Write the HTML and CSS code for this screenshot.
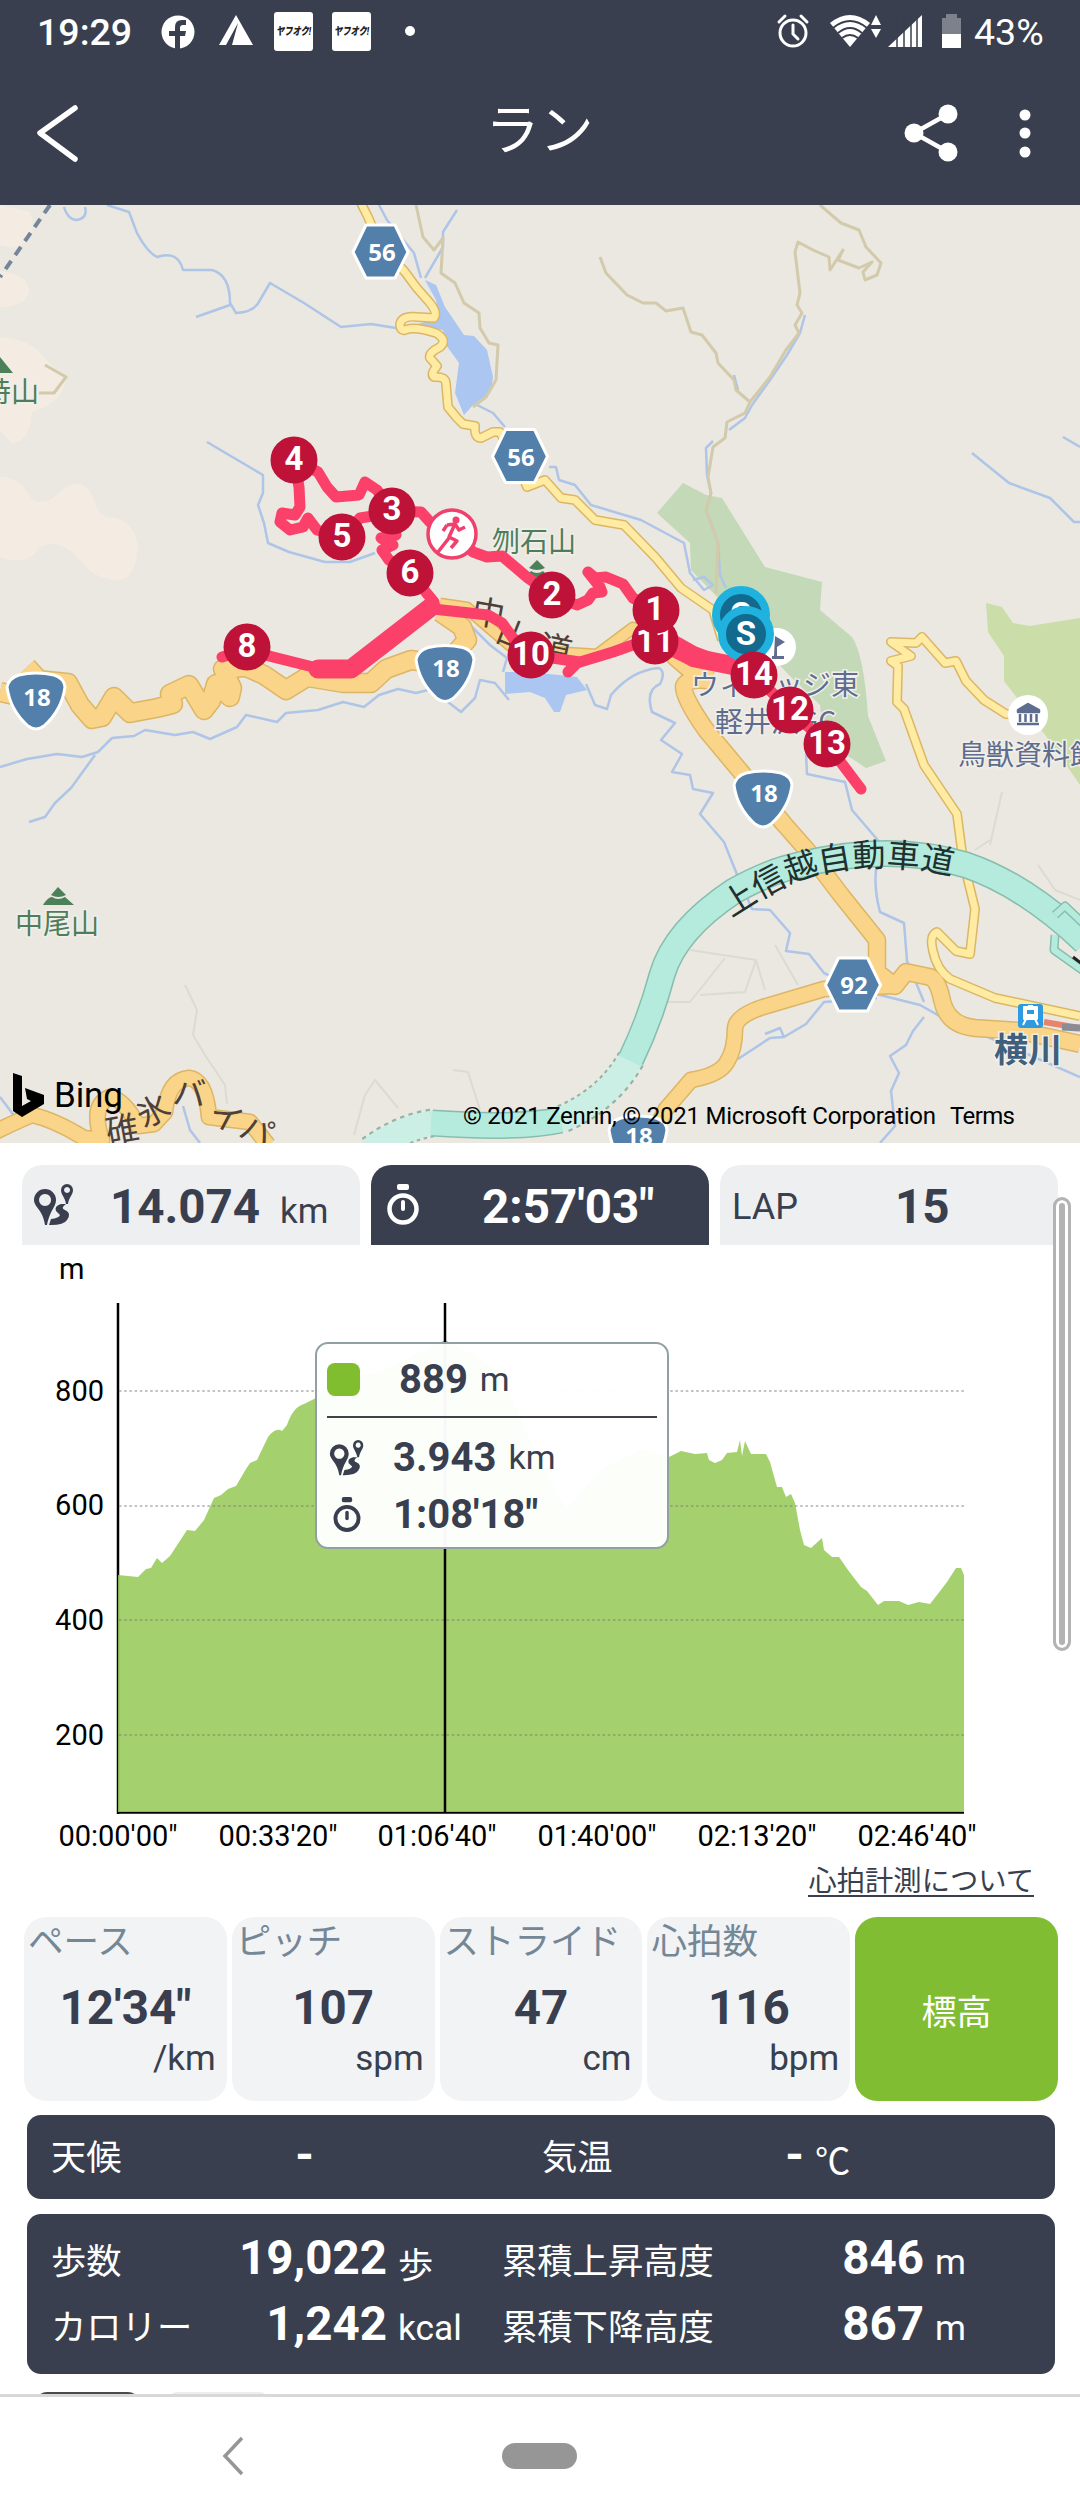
FILE: index.html
```html
<!DOCTYPE html>
<html lang="ja">
<head>
<meta charset="UTF-8">
<meta name="viewport" content="width=device-width, initial-scale=1.0">
<title>ラン</title>
<link rel="stylesheet" href="styles.css">
</head>
<body>
  <div class="status-bar">
    <span class="clock">19:29</span>
    <svg class="status-icons" width="260" height="64" viewBox="155 0 260 64">
      <circle cx="178" cy="32" r="16.5" fill="#fff"/>
      <path d="M175 49V36h-6v-5h6v-4q0-7 7-7h4v5h-3q-3 0-3 3v3h6l-1 5h-5v13z" fill="#393f4e"/>
      <path d="M236 15L253 45H232L238 23L226 45H219Z" fill="#fff"/>
      <rect x="274" y="12" width="39" height="39" rx="3" fill="#fff"/>
      <rect x="332" y="12" width="39" height="39" rx="3" fill="#fff"/>
      <text class="app-badge" x="276" y="35" textLength="35" lengthAdjust="spacingAndGlyphs">ヤフオク!</text>
      <text class="app-badge" x="334" y="35" textLength="35" lengthAdjust="spacingAndGlyphs">ヤフオク!</text>
      <circle cx="410" cy="31" r="5" fill="#fff"/>
    </svg>
    <svg class="status-right" width="190" height="64" viewBox="775 0 190 64">
      <g fill="none" stroke="#fff" stroke-width="3" stroke-linecap="round">
        <circle cx="793" cy="33" r="13"/>
        <path d="M793 25v9l5 5M779 22l6-6M807 22l-6-6"/>
      </g>
      <path d="M850 47L830 23Q850 7 870 23Z" fill="#fff"/>
      <g fill="none" stroke="#393f4e" stroke-width="2">
        <path d="M833 28Q850 14 867 28M838 33Q850 23 862 33M842 38Q850 32 858 38"/>
      </g>
      <path d="M876 15l5 10h-10zM876 38l5-9h-10z" fill="#fff"/>
      <path d="M888 47L922 15V47Z" fill="#fff"/>
      <path d="M897 15v32M904 15v32M911 15v32M917 15v32" stroke="#393f4e" stroke-width="1.5"/>
      <path d="M946 18v-4h11v4h4v17h-19V18z" fill="#7d818b"/>
      <rect x="942" y="34" width="19" height="14" fill="#fff"/>
    </svg>
    <span class="battery">43%</span>
  </div>

  <div class="app-bar">
    <svg width="120" height="140" viewBox="0 64 120 140">
      <path class="back" d="M75 108L40 133L75 159"/>
    </svg>
    <h1>ラン</h1>
    <svg width="180" height="140" viewBox="900 64 180 140">
      <path d="M948 114L914 133L948 152" fill="none" stroke="#fff" stroke-width="4.500"/>
      <g fill="#fff">
        <circle cx="948" cy="114" r="9.500"/><circle cx="914" cy="133" r="9.500"/><circle cx="948" cy="152" r="9.500"/>
        <circle cx="1025" cy="115" r="5.500"/><circle cx="1025" cy="133" r="5.500"/><circle cx="1025" cy="152" r="5.500"/>
      </g>
    </svg>
  </div>

  <svg class="map" width="1080" height="938" viewBox="0 205 1080 938">
    <defs>
      <path id="r56" d="M361 203L368 217L380 245L405 272L416 287L430 303Q438 313 434 318L418 317Q402 315 400 324Q400 331 405 330Q414 326 436 333Q448 340 440 347Q428 353 430 358L437 366Q430 374 434 377Q446 376 446 384L448 407L457 418L463 424L475 426Q474 438 481 438L493 432L500 432L520 470L527 487L545 480L561 498L575 500L595 520L624 525L656 558L681 588L713 610L722 640"/>
      <path id="ne" d="M1020 715L1006 714L984 700L966 681L956 661L945 663L922 637L916 643L891 642L911 656L891 661L898 666L897 702L904 709L924 765L957 814L963 860L975 909L970 954L956 951L937 932Q929 935 933 951Q937 970 950 979L995 998L1080 1016"/>
      <path id="r18w" d="M0 692L36 700M27 667L39 680L68 683L80 705L92 719L102 717L114 697L130 713L157 708L173 704L170 694L189 685L204 710L211 701L216 684L230 697L232 688L223 669L246 667L264 675L286 690L307 677L343 683L371 683L386 669L411 660L445 665L467 640L462 627L440 612"/>
      <path id="r18m" d="M440 604L467 608L490 628L510 645L550 652L597 655L613 643L633 628L655 640L674 660L688 672L713 670"/>
      <path id="r18e" d="M713 681Q688 677 684 686Q682 696 706 730L741 772L784 824L806 849L841 895L877 940V972L895 986L906 972L930 977Q938 980 942 1000Q947 1025 975 1028L1020 1031L1080 1044"/>
      <path id="r92" d="M895 986L824 989L763 1007Q736 1016 735 1028Q735 1050 727 1062Q720 1075 691 1080L666 1109L650 1140"/>
      <path id="bypass" d="M-5 1132Q15 1122 32 1115Q55 1120 84 1138L102 1140Q90 1105 110 1097Q125 1100 138 1126L154 1124L165 1112Q168 1080 189 1078Q206 1080 209 1117L250 1122L268 1145"/>
    </defs>
    <rect x="0" y="205" width="1080" height="938" fill="#eae8e0"/>

    <g fill="#f4ece3">
      <path d="M0 205L30 212Q40 240 14 248L0 245zM0 271Q30 275 29 292Q25 307 0 307zM0 337Q35 340 46 360L66 377Q65 402 32 412Q30 443 11 443L0 430z"/>
      <path d="M0 477Q20 476 32 500Q45 505 54 497Q80 470 93 497Q97 514 107 517Q135 518 138 548Q135 580 118 580Q95 580 80 560Q60 537 39 547Q30 567 0 557z"/>
    </g>
    <path class="boundary" d="M50 205L0 277"/>
    <path fill="#c3d9b7" d="M683 483L706 495L722 498L765 567L822 582L820 610L852 637Q864 655 868 716L886 761L866 768L824 740L820 705L788 674L720 600L691 570L690 543L657 513z"/>
    <path fill="#cbdda9" d="M986 603L1002 607L1013 623L1030 626L1080 618V785L1049 740L1004 681V656L988 632z"/>

    <g class="water-area">
      <path d="M425 280L436 285L445 307L464 335L474 336L487 350L493 377L491 392L473 405L464 415L455 393L459 363L446 345L443 330L414 325L439 318L436 300z"/>
      <path d="M505 672L530 672L577 677L587 690L566 695L560 712L554 712L545 698L530 692L505 694z"/>
    </g>
    <g class="river">
      <path d="M107 205L129 212L137 233Q147 252 157 257Q178 250 183 270H212Q230 275 230 303L236 313Q255 312 260 300L270 283L304 303L341 327L371 324L396 328M196 317L230 305M64 207Q68 220 77 220Q88 218 85 207"/>
      <path d="M379 205L387 220L414 253L421 278M457 210L443 232V247L425 278M475 404L493 413L505 427M549 467H556L559 480L575 485L591 505L641 520L684 543L690 573L704 590L713 585L704 577L693 580"/>
      <path d="M207 442L229 455L263 475V493L258 505L264 523L268 543L289 552L325 562H350L375 553"/>
      <path d="M0 767L27 759L57 754L82 757L98 752L112 738L134 736L145 730L175 735L193 732L210 739L237 727L246 715L277 722L286 713L318 710L343 702L364 707L379 695L398 689L416 693L428 690M448 702L461 712L475 698L480 680L495 683L509 700M95 755L71 788L55 803L45 817L29 822M468 623L490 645L507 658L503 672"/>
      <path d="M586 684L595 705L607 709L611 695Q632 670 659 668Q666 672 660 684Q645 690 652 712L675 723L661 740L682 754L672 772L690 775L693 789L713 793L700 814L724 842L738 877L752 909L770 910L790 933L786 951L809 954L824 973L860 990L920 1005L952 1023L988 1037L1080 1077"/>
      <path d="M806 754L807 774L845 782L852 810L882 845Q870 875 880 912L904 923L907 961L924 1002M738 1059L770 1038L784 1037L806 1024L824 1002L877 998M924 1017L913 1031L906 1045L890 1056L899 1073L891 1091L895 1126L880 1143M765 1034L780 1028L784 1037"/>
      <path d="M972 453L1009 483L1050 498L1074 522H1080M1063 437L1080 447M805 315L800 333L787 355L770 380L752 405L745 418L729 430M713 441L706 448L707 475L711 493L706 510L718 543L720 575L726 588M734 375L738 390M0 1097L15 1117M183 1106L190 1130L200 1143"/>
    </g>
    <g class="trail">
      <path d="M416 205L423 237L434 250L443 238L441 273L455 283L464 303L479 313L480 328L489 343L498 345L496 380L486 397L473 407M45 365L66 377L54 393H39"/>
      <path d="M600 257L606 273L627 295L643 303H656L666 311L683 308L691 332L702 335L716 353L718 363L734 380L736 390L750 402L745 413L727 422L725 438L713 447L708 477L711 493L706 510L718 543L716 593M750 402L770 377L786 350L799 333L795 325L802 313L797 305L800 293L795 252L798 242L813 250L829 257L830 270L843 250L838 260L859 268L872 262L863 272L865 280L877 275L881 263L866 247L859 230L841 223L820 205"/>
    </g>
    <g class="path-faint">
      <path d="M185 985L197 1010L193 1035L205 1055L225 1085L227 1104M354 1135L365 1095L375 1080L398 1108M453 1070L468 1072L480 1110M668 1002L690 1002L725 958M690 950L756 960L745 992L700 995M756 960L765 990M775 945L798 985M1002 792L990 845M1038 865L1055 890L1080 900M975 850L990 840"/>
    </g>

    <g class="casing">
      <use href="#r18w" class="w20"/><use href="#r18m" class="w13"/><use href="#r56" class="w10"/><use href="#ne" class="w10"/>
      <use href="#r92" class="w17"/><use href="#r18e" class="w19"/><use href="#bypass" class="w17"/>
    </g>
    <g class="road">
      <use href="#r18w" class="w18 orange"/><use href="#r18m" class="w10 orange"/><use href="#r56" class="w7 yellow"/><use href="#ne" class="w7 yellow"/>
      <use href="#r92" class="w14 orange"/><use href="#r18e" class="w16 orange"/><use href="#bypass" class="w14 orange"/>
    </g>

    <!-- expressway, tunnel sections are lighter with dotted edges -->
    <g fill="none">
      <path d="M631 1059Q608 1100 560 1120M432 1123Q400 1128 370 1150" stroke="#8fb5a9" stroke-width="29" stroke-dasharray="4 4"/>
      <path d="M631 1059Q608 1100 560 1120M432 1123Q400 1128 370 1150" stroke="#cbefe4" stroke-width="25"/>
      <path d="M560 1120Q520 1129 432 1123M631 1059Q650 1020 662 975Q675 930 734 891Q770 871 799 865Q890 842 966 865Q1025 885 1085 942" stroke="#86bdae" stroke-width="27"/>
      <path d="M561 1120Q520 1129 431 1123M630 1061Q650 1020 662 975Q675 930 734 891Q770 871 799 865Q890 842 966 865Q1025 885 1085 942" stroke="#b4ebdd" stroke-width="24"/>
      <path d="M1055 915L1065 906L1085 925M1055 935L1054 950L1085 972" stroke="#86bdae" stroke-width="9"/>
      <path d="M1055 915L1065 906L1085 925M1055 935L1054 950L1085 972" stroke="#b4ebdd" stroke-width="6"/>
    </g>

    <g class="map-label green">
      <text x="-17" y="402">特山</text>
      <text x="15" y="934">中尾山</text>
      <text x="492" y="552">刎石山</text>
    </g>
    <g fill="#4c8058">
      <path d="M-13 373Q-7 360 0 357L13 373z"/>
      <path d="M51 895L58 887L66 895Q58 899 51 895M43 905Q48 897 52 897Q58 901 65 897L74 905z"/>
      <path d="M529 568L537 560L545 568Q537 572 529 568M525 577L531 571Q537 575 543 571L549 577z"/>
    </g>
    <g class="map-label slate">
      <text x="691" y="695">ウィレッジ東</text>
      <text x="715" y="732">軽井沢GC</text>
      <text x="958" y="765">鳥獣資料館</text>
    </g>
    <g class="road-name">
      <path id="expName" d="M731 918Q785 882 815 875Q885 857 962 878" fill="none"/>
      <text><textPath href="#expName" textLength="233">上信越自動車道</textPath></text>
      <text class="brown" transform="translate(470 622) rotate(10)">中</text>
      <text class="brown" transform="translate(494 640) rotate(22)">山</text>
      <text class="brown" transform="translate(537 657) rotate(12)">道</text>
      <text class="brown" transform="translate(108 1144) rotate(-10)">碓</text>
      <text class="brown" transform="translate(144 1129) rotate(-28)">氷</text>
      <text class="brown" transform="translate(172 1104) rotate(4)">バ</text>
      <text class="brown" transform="translate(206 1120) rotate(28)">イ</text>
      <text class="brown" transform="translate(237 1136) rotate(22)">パ</text>
      <path d="M1073 957L1082 964" stroke="#222" stroke-width="3"/>
    </g>

    <g class="shield">
      <path id="hex" d="M366 225H395L408 252L395 278H366L353 252z"/>
      <use href="#hex" x="139.500" y="204.500"/>
      <use href="#hex" x="472.500" y="733"/>
      <path id="oni" d="M19 675Q36 671 54 675Q64 678 65 687Q62 710 44 726Q36 732 28 726Q10 710 7 687Q9 678 19 675z"/>
      <use href="#oni" x="409" y="-27.500"/>
      <use href="#oni" x="727" y="98"/>
      <use href="#oni" x="602" y="443"/>
    </g>
    <g class="shield-text">
      <text x="382" y="261">56</text><text x="521" y="466">56</text><text x="854" y="994">92</text>
      <text x="37" y="706">18</text><text x="446" y="677">18</text><text x="764" y="802">18</text><text x="639" y="1145">18</text>
    </g>

    <circle cx="1028" cy="715" r="20" fill="#fff"/>
    <path d="M1018 710L1028 704L1039 710V712H1018zM1020 714v8M1025.500 714v8M1031 714v8M1036.500 714v8M1017 724h22" fill="#5e6c8e" stroke="#5e6c8e" stroke-width="2.500"/>
    <circle cx="777" cy="647" r="19" fill="#fff"/>
    <path d="M775 636L785 642L777 647V656h7v3h-12v-3h2z" fill="#5e6c8e"/>
    <path d="M1044 1022L1080 1028" stroke="#e8836e" stroke-width="6"/>
    <path d="M1062 1027L1080 1028" stroke="#8b8b96" stroke-width="7"/>
    <rect x="1018" y="1004" width="25" height="24" rx="3" fill="#2e9be0"/>
    <path d="M1024 1007h13v12h-13zM1026 1019l-3 6M1035 1019l3 6M1028 1006h5" fill="#fff" stroke="#fff" stroke-width="2"/>
    <path d="M1027 1010h7v4h-7z" fill="#2e9be0"/>
    <text class="station" x="994" y="1062">横川</text>

    <g class="track">
      <path d="M861 789L827 744L790 710L754 675L727 664L695 652L656 630V610L633 598L623 584L606 577L595 578L588 572L600 587L602 592L593 593L588 600L577 605L552 595L528 578L502 556L487 557L473 552L452 534L430 522L421 512L392 511L377 490L365 482L359 495L336 497L327 487L318 472L294 460L299 487L300 507L295 515L282 513L280 522L290 530L303 527L308 518L317 530L342 537L360 518L392 513L396 535L381 538L393 545L382 550L389 560L410 573L434 602"/>
      <path d="M222 657L247 650L273 657L313 667L350 672M433 609L488 615L502 623L513 638L531 655L580 662L613 652L655 637M568 672L578 662"/>
      <path class="thick" d="M318 669L351 669L431 607M675 648L695 658L735 666"/>
    </g>

    <g class="pin">
      <circle cx="655" cy="641" r="23.500"/><text x="655" y="652">11</text>
      <circle cx="656" cy="610" r="23.500"/><text x="655" y="620">1</text>
      <circle cx="552" cy="595" r="23.500"/><text x="552" y="605">2</text>
      <circle cx="531" cy="655" r="23.500"/><text x="531" y="665">10</text>
      <circle cx="342" cy="537" r="23.500"/><text x="342" y="547">5</text>
      <circle cx="392" cy="511" r="23.500"/><text x="392" y="520">3</text>
      <circle cx="294" cy="460" r="23.500"/><text x="294" y="470">4</text>
      <circle cx="410" cy="573" r="23.500"/><text x="410" y="583">6</text>
      <circle cx="247" cy="647" r="23.500"/><text x="247" y="657">8</text>
    </g>
    <circle cx="452" cy="534" r="24" fill="#fff" stroke="#f0406c" stroke-width="3.500"/>
    <circle cx="456" cy="520" r="3.500" fill="#f0406c"/>
    <path d="M447 525L455 524L459 530L465 527M454 526L449 537L457 541L451 548M449 538L438 552M447 525L443 531" fill="none" stroke="#f0406c" stroke-width="3.500"/>
    <g class="goal">
      <circle cx="741" cy="615" r="25"/><text x="741" y="626">G</text>
      <circle cx="746" cy="634" r="24"/><text x="746" y="645">S</text>
    </g>
    <g class="pin">
      <circle cx="790" cy="710" r="23.500"/><text x="790" y="720">12</text>
      <circle cx="754" cy="675" r="23.500"/><text x="754" y="685">14</text>
      <circle cx="827" cy="744" r="23.500"/><text x="827" y="754">13</text>
    </g>

    <path d="M13 1073L22 1076V1106L31 1101L27 1099L25 1088L44 1095V1104L22 1117L13 1111z" fill="#000"/>
    <text class="credit bing" x="54" y="1107" textLength="69">Bing</text>
    <text class="credit" x="463" y="1124" textLength="473">© 2021 Zenrin, © 2021 Microsoft Corporation</text>
    <text class="credit" x="950" y="1124" textLength="65">Terms</text>
  </svg>

  <div class="content">
    <svg class="symbols" width="0" height="0">
      <symbol id="route" viewBox="0 0 40 42">
        <path fill-rule="evenodd" d="M11 5a11 11 0 0 1 11 11c0 7-6 10-9 25h-2C9 26 0 23 0 16A11 11 0 0 1 11 5zm0 5a6 6 0 1 0 .1 0z"/>
        <path fill-rule="evenodd" d="M33 0a6 6 0 0 1 6 6c0 5-4 7-5 14h-2c-1-7-5-9-5-14a6 6 0 0 1 6-6zm0 3a3 3 0 1 0 .1 0z"/>
        <path d="M27 20h5q-6 4-1 6q7 3 2 10q-3 5-16 5h-2l2-6q8-1 9-4l-4-4q-2-5 5-7z"/>
      </symbol>
      <symbol id="watch" viewBox="0 0 32 42">
        <rect x="10" y="0" width="12" height="6" rx="2"/>
        <circle cx="16" cy="25" r="13.500" fill="none" stroke="currentColor" stroke-width="4.500"/>
        <rect x="14" y="16" width="4" height="11" rx="2"/>
      </symbol>
    </svg>
    <div class="tabs">
      <div class="tab">
        <svg class="tab-icon"><use href="#route"/></svg>
        <b class="distance">14.074</b><span class="unit">km</span>
      </div>
      <div class="tab active">
        <svg class="tab-icon"><use href="#watch"/></svg>
        <b class="time">2:57'03"</b>
      </div>
      <div class="tab">
        <span class="lap">LAP</span><b class="lap-count">15</b>
      </div>
    </div>

    <div class="chart">
      <svg width="1080" height="613" viewBox="0 1245 1080 613">
        <text x="59" y="1279">m</text>
        <path class="axis" d="M118 1303V1814M117 1812.500H964"/>
        <path class="area" d="M118 1812V1575L138 1577L146 1569L151 1568L157 1558L162 1563L170 1556L187 1530L195 1531L204 1520L214 1498L221 1495L228 1489L236 1486L246 1469L250 1463L257 1460L268 1437Q276 1427 282 1431L287 1425Q293 1407 304 1404L314 1399L340 1378L380 1372L445 1340L500 1370L530 1440L566 1510L600 1470L640 1450L669 1457L681 1451L695 1454L707 1453L709 1460L715 1463L722 1460L727 1453L737 1452L740 1440L742 1456L745 1441L751 1454H766L770 1462L777 1487H782L786 1497L791 1494L795 1503L800 1530L804 1545L811 1548L822 1538L824 1550L832 1557H839L848 1570L861 1587L867 1591L878 1605L884 1601H899L908 1605L919 1602L930 1604L937 1595L947 1582L956 1568H961L964 1575V1812z"/>
        <path class="grid" d="M119 1391H964M119 1506H964M119 1620H964M119 1735H964"/>
        <path class="cursor" d="M445 1303V1812"/>
        <g text-anchor="end">
          <text x="104" y="1401">800</text><text x="104" y="1515">600</text><text x="104" y="1630">400</text><text x="104" y="1745">200</text>
        </g>
        <g text-anchor="middle">
          <text x="118" y="1846">00:00'00"</text><text x="278" y="1846">00:33'20"</text><text x="437" y="1846">01:06'40"</text>
          <text x="597" y="1846">01:40'00"</text><text x="757" y="1846">02:13'20"</text><text x="917" y="1846">02:46'40"</text>
        </g>
      </svg>
      <div class="tooltip">
        <div class="tip-row tip-top"><i class="swatch"></i><b>889</b><span>m</span></div>
        <div class="tip-row"><svg class="tip-icon"><use href="#route"/></svg><b>3.943</b><span>km</span></div>
        <div class="tip-row"><svg class="tip-icon"><use href="#watch"/></svg><b>1:08'18"</b></div>
      </div>
      <div class="scrollbar"></div>
    </div>

    <div class="about"><a href="#">心拍計測について</a></div>

    <div class="cards">
      <div class="card"><span class="label">ペース</span><b>12'34"</b><span class="card-unit">/km</span></div>
      <div class="card"><span class="label">ピッチ</span><b>107</b><span class="card-unit">spm</span></div>
      <div class="card"><span class="label">ストライド</span><b>47</b><span class="card-unit">cm</span></div>
      <div class="card"><span class="label">心拍数</span><b>116</b><span class="card-unit">bpm</span></div>
      <div class="card selected">標高</div>
    </div>

    <div class="panel weather">
      <span>天候</span><b>-</b><span></span>
      <span>気温</span><b>-</b><span class="panel-unit">℃</span>
    </div>
    <div class="panel totals">
      <span>歩数</span><b>19,022</b><span class="panel-unit">歩</span>
      <span>累積上昇高度</span><b>846</b><span class="panel-unit">m</span>
      <span>カロリー</span><b>1,242</b><span class="panel-unit">kcal</span>
      <span>累積下降高度</span><b>867</b><span class="panel-unit">m</span>
    </div>
    <div class="next-tabs"><i></i><i></i></div>
  </div>

  <div class="nav-bar">
    <svg width="60" height="60" viewBox="0 0 60 60"><path d="M39 12L22 30L39 48" fill="none" stroke="#969696" stroke-width="3.500"/></svg>
    <div class="home"></div>
  </div>
</body>
</html>
```
FILE: styles.css
```css
* {
  box-sizing: border-box;
}
body {
  margin: 0;
  width: 1080px;
  height: 2520px;
  overflow: hidden;
  background: #fff;
  color: #393f4e;
  font-family: Roboto, "Noto Sans CJK JP", sans-serif;
}
svg {
  display: block;
}

/* top bars */
.status-bar {
  display: flex;
  align-items: center;
  height: 64px;
  padding-left: 37px;
  background: #393f4e;
  color: #fff;
  font-size: 37.5px;
  font-weight: 500;
}
.clock {
  width: 118px;
}
.status-right {
  margin-left: 360px;
}
.battery {
  margin-left: 9px;
  font-weight: 400;
}
.app-badge {
  font-size: 11px;
  font-weight: 900;
  font-style: italic;
  fill: #222;
}
.app-bar {
  display: flex;
  justify-content: space-between;
  height: 141px;
  background: #393f4e;
}
.app-bar h1 {
  margin: 0 0 0 59px;
  color: #fff;
  font-size: 54px;
  font-weight: 400;
  line-height: 136px;
}
.back {
  fill: none;
  stroke: #fff;
  stroke-width: 5.5;
  stroke-linecap: round;
  stroke-linejoin: round;
}

/* map */
.map {
  overflow: hidden;
}
.map use,
.map path {
  stroke-linejoin: round;
}
.boundary {
  stroke: #76869a;
  stroke-width: 4;
  stroke-dasharray: 10 7;
}
.water-area {
  fill: #aac6f1;
}
.river,
.trail,
.path-faint,
.casing,
.road {
  fill: none;
}
.river {
  stroke: #aec5e8;
  stroke-width: 2.5;
}
.trail {
  stroke: #d2caaa;
  stroke-width: 3;
}
.path-faint {
  stroke: #dddad2;
  stroke-width: 2;
}
.casing {
  stroke: #dcb665;
}
.orange {
  stroke: #fad488;
}
.yellow {
  stroke: #ffeba2;
}
.w7 { stroke-width: 7; }
.w10 { stroke-width: 10; }
.w13 { stroke-width: 13; }
.w14 { stroke-width: 14; }
.w16 { stroke-width: 15.5; }
.w17 { stroke-width: 17; }
.w18 { stroke-width: 17.5; }
.w19 { stroke-width: 18.5; }
.w20 { stroke-width: 20.5; }
.map-label {
  font: 28px "Noto Sans CJK JP", sans-serif;
  paint-order: stroke;
  stroke: #f1efe9;
  stroke-width: 3px;
}
.green {
  fill: #4f7d5b;
}
.slate {
  fill: #5e6c8e;
}
.road-name {
  font: 33px "Noto Sans CJK JP", sans-serif;
  fill: #20302f;
}
.brown {
  fill: #4d4038;
}
.shield {
  fill: #5280aa;
  stroke: #fff;
  stroke-width: 3;
}
.shield-text {
  font: 700 24px "Noto Sans", sans-serif;
  fill: #fff;
  text-anchor: middle;
}
.station {
  font: 700 34px "Noto Sans CJK JP", sans-serif;
  fill: #405f7d;
  paint-order: stroke;
  stroke: #f1efe9;
  stroke-width: 3px;
}
.track {
  fill: none;
  stroke: #fb4069;
  stroke-width: 11;
  stroke-linecap: round;
}
.thick {
  stroke-width: 19;
}
.pin {
  fill: #be1238;
}
.pin text,
.goal text {
  fill: #fff;
  font-size: 33px;
  font-weight: 700;
  text-anchor: middle;
}
.goal {
  fill: #126a8f;
  stroke: #20b2de;
  stroke-width: 8;
}
.goal text {
  stroke: none;
}
.credit {
  font-size: 24px;
  fill: #000;
}
.bing {
  font-size: 35px;
}

/* tabs over the chart */
.content {
  height: 1251px;
  padding-top: 22px;
  overflow: hidden;
}
.symbols {
  position: absolute;
}
.tabs {
  display: grid;
  grid-template-columns: repeat(3, 338px);
  gap: 11px;
  padding-left: 22px;
}
.tab {
  display: flex;
  align-items: center;
  height: 80px;
  padding-left: 12px;
  border-radius: 20px 20px 0 0;
  background: #eeeff0;
}
.tab b {
  font-size: 47.5px;
  line-height: 80px;
  padding-top: 3px;
}
.tab.active {
  background: #393f4e;
  color: #fff;
}
.tab-icon {
  width: 40px;
  height: 42px;
  fill: currentColor;
}
.distance {
  width: 170px;
  margin-left: 36px;
}
.unit {
  font-size: 35px;
  padding-top: 12px;
}
.time {
  margin-left: 59px;
}
.lap {
  width: 163px;
  padding-top: 3px;
  font-size: 36px;
}

/* elevation chart */
.chart {
  position: relative;
}
.chart text {
  font-size: 29px;
  fill: #000;
}
.grid {
  stroke: #777;
  stroke-opacity: .45;
  stroke-width: 2;
  stroke-dasharray: 2.5 2.7;
}
.axis,
.cursor {
  fill: none;
  stroke: #000;
  stroke-width: 2.5;
}
.area {
  fill: #97c957;
  fill-opacity: .87;
}
.tooltip {
  position: absolute;
  left: 315px;
  top: 97px;
  width: 354px;
  height: 207px;
  padding: 0 10px;
  border: 2px solid #90a0a4;
  border-radius: 13px;
  background: rgba(255, 255, 255, .97);
}
.tip-row {
  display: flex;
  align-items: center;
  height: 57px;
  line-height: 57px;
  font-size: 34px;
}
.tip-row b {
  margin: 0 12px 0 26px;
  font-size: 40px;
}
.tip-top {
  height: 74px;
  margin-bottom: 11px;
  padding-bottom: 2px;
  border-bottom: 2px solid #40424a;
}
.tip-top b {
  margin-left: 39px;
}
.swatch {
  width: 33px;
  height: 33px;
  border-radius: 8px;
  background: #80bd2f;
}
.tip-icon {
  width: 40px;
  height: 36px;
  fill: currentColor;
}
.scrollbar {
  position: absolute;
  left: 1053px;
  top: -48px;
  width: 18px;
  height: 454px;
  border: 3px solid #b3b3b3;
  border-radius: 9px;
  background: #b3b3b3;
  box-shadow: inset 0 0 0 3px #fff;
}
.about {
  height: 59px;
  padding: 5px 46px 0 0;
  text-align: right;
  font-size: 28.3px;
  line-height: 38px;
}
.about a {
  display: inline-block;
  height: 34px;
  border-bottom: 2px solid #393f4e;
  color: #393f4e;
  text-decoration: none;
}

/* metric cards */
.cards {
  display: grid;
  grid-template-columns: repeat(5, 1fr);
  gap: 5px;
  padding: 0 22px 0 24px;
}
.card {
  display: flex;
  flex-direction: column;
  height: 184px;
  border-radius: 22px;
  background: #f2f3f4;
}
.label {
  height: 64px;
  padding-left: 4px;
  color: #748797;
  font-size: 35.5px;
  line-height: 51px;
  white-space: nowrap;
}
.card b {
  height: 54px;
  font-size: 47.5px;
  line-height: 54px;
  text-align: center;
}
.card-unit {
  padding-right: 11px;
  font-size: 35px;
  line-height: 48px;
  text-align: right;
}
.card.selected {
  align-items: center;
  justify-content: center;
  background: #80bd32;
  color: #fff;
  font-size: 35px;
}

/* dark summary panels */
.panel {
  display: grid;
  grid-template-columns: 148px 188px 115px 210px 212px 1fr;
  align-items: center;
  margin: 14px 25px 0 27px;
  padding-left: 24px;
  border-radius: 14px;
  background: #393f4e;
  color: #fff;
  font-size: 35.3px;
  white-space: nowrap;
}
.panel b {
  font-size: 47.5px;
  text-align: right;
}
.panel .panel-unit {
  padding: 8px 0 0 11px;
}
.weather {
  grid-template-columns: 148px 115px 228px 123px 139px 1fr;
  height: 84px;
  padding-bottom: 5px;
}
.totals {
  grid-auto-rows: 66px;
  height: 160px;
  padding-top: 11px;
  margin-top: 15px;
}
.next-tabs {
  display: flex;
  gap: 26px;
  padding: 18px 0 0 35px;
}
.next-tabs i {
  width: 105px;
  height: 60px;
  border-radius: 12px;
  background: #4a4a4a;
}
.next-tabs i + i {
  background: #eee;
}

.nav-bar {
  display: grid;
  grid-template-columns: 299px 75px;
  align-items: center;
  height: 126px;
  padding: 0 0 5px 203px;
  border-top: 3px solid #d8d8d8;
  background: #fff;
}
.home {
  width: 75px;
  height: 26px;
  border-radius: 13px;
  background: #969696;
}
```
